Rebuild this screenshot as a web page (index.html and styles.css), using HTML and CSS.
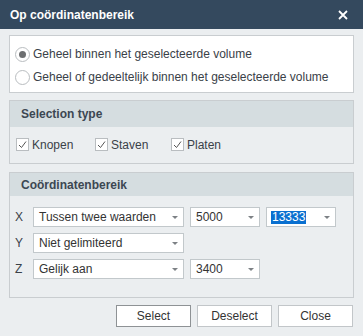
FILE: index.html
```html
<!DOCTYPE html>
<html>
<head>
<meta charset="utf-8">
<link rel="stylesheet" href="styles.css">
</head>
<body>
<div class="dialog">
  <div class="titlebar">
    <span class="title">Op coördinatenbereik</span>
    <svg class="close" width="10" height="10" viewBox="0 0 10 10"><path d="M1 1L9 9M9 1L1 9" stroke="#fff" stroke-width="1.8"/></svg>
  </div>
  <div class="content">
    <div class="frame">
      <label class="radio-row"><span class="radio checked"></span>Geheel binnen het geselecteerde volume</label>
      <label class="radio-row"><span class="radio"></span>Geheel of gedeeltelijk binnen het geselecteerde volume</label>
    </div>
    <div class="group">
      <div class="group-head">Selection type</div>
      <div class="group-body checks">
        <label class="check-row"><span class="check"><svg width="11" height="11" viewBox="0 0 11 11"><path d="M2 6L4.5 8.5L9 2.5" fill="none" stroke="#555" stroke-width="1"/></svg></span>Knopen</label>
        <label class="check-row"><span class="check"><svg width="11" height="11" viewBox="0 0 11 11"><path d="M2 6L4.5 8.5L9 2.5" fill="none" stroke="#555" stroke-width="1"/></svg></span>Staven</label>
        <label class="check-row"><span class="check"><svg width="11" height="11" viewBox="0 0 11 11"><path d="M2 6L4.5 8.5L9 2.5" fill="none" stroke="#555" stroke-width="1"/></svg></span>Platen</label>
      </div>
    </div>
    <div class="group coords">
      <div class="group-head">Coördinatenbereik</div>
      <div class="group-body rows">
        <div class="row">
          <span class="axis">X</span>
          <div class="combo wide"><span>Tussen twee waarden</span><i class="arrow"></i></div>
          <div class="combo small"><span>5000</span><i class="arrow"></i></div>
          <div class="combo small"><span class="sel">13333</span><i class="arrow"></i></div>
        </div>
        <div class="row">
          <span class="axis">Y</span>
          <div class="combo wide"><span>Niet gelimiteerd</span><i class="arrow"></i></div>
        </div>
        <div class="row">
          <span class="axis">Z</span>
          <div class="combo wide"><span>Gelijk aan</span><i class="arrow"></i></div>
          <div class="combo small"><span>3400</span><i class="arrow"></i></div>
        </div>
      </div>
    </div>
    <div class="buttons">
      <button class="btn default">Select</button>
      <button class="btn">Deselect</button>
      <button class="btn">Close</button>
    </div>
  </div>
</div>
</body>
</html>
```
FILE: styles.css
```css
* { box-sizing: border-box; }
html, body { margin: 0; padding: 0; }
body {
  width: 363px;
  height: 336px;
  background: #ebeef0;
  font-family: "Liberation Sans", Arial, sans-serif;
  font-size: 12px;
  color: #333;
  overflow: hidden;
}
.dialog { width: 363px; height: 336px; display: flex; flex-direction: column; }
.titlebar {
  height: 29px;
  background: #34495e;
  color: #fff;
  display: flex;
  align-items: center;
  justify-content: space-between;
  padding: 0 15px 0 10px;
}
.title { font-weight: bold; font-size: 12px; }
.close { display: block; }
.content { padding: 6px 9px 0 9px; display: flex; flex-direction: column; }
.frame {
  height: 58px;
  background: #fff;
  border: 1px solid #c9cdd0;
  padding: 10px 0 0 5px;
  display: flex;
  flex-direction: column;
  gap: 7px;
}
.radio-row { display: flex; align-items: center; height: 16px; color: #3a4148; }
.radio {
  width: 15px; height: 15px;
  border: 1px solid #b9bdc0;
  border-radius: 50%;
  background: #fff;
  margin-right: 3px;
  display: flex; align-items: center; justify-content: center;
}
.radio.checked::after {
  content: "";
  width: 7px; height: 7px;
  border-radius: 50%;
  background: #6d6f71;
}
.group {
  margin-top: 7px;
  border: 1px solid #c9cdd0;
  background: #ebeef0;
}
.group-head {
  height: 26px;
  background: #d5dde0;
  font-weight: bold;
  color: #3c4752;
  padding-left: 11px;
  display: flex;
  align-items: center;
}
.group-body.checks {
  height: 36px;
  display: flex;
  align-items: center;
  padding-left: 6px;
  padding-bottom: 1px;
}
.check-row { display: flex; align-items: center; color: #3a4148; width: 79px; }
.check-row + .check-row { width: 76px; }
.check {
  width: 13px; height: 13px;
  border: 1px solid #b9bdc0;
  background: #fff;
  margin-right: 3px;
  display: flex; align-items: center; justify-content: center;
}
.check svg { display: block; }
.coords { margin-top: 8px; }
.coords .group-head { height: 23px; }
.group-body.rows {
  height: 101px;
  padding: 11px 0 0 5px;
  display: flex;
  flex-direction: column;
  gap: 6px;
}
.row { display: flex; align-items: center; height: 20px; }
.axis { width: 18px; color: #3a4148; }
.combo {
  height: 20px;
  border: 1px solid #c2c8cb;
  background: #fff;
  display: flex;
  align-items: center;
  justify-content: space-between;
  padding: 0 5px 0 5px;
  color: #333;
}
.combo.wide { width: 151px; }
.combo.small { width: 70px; margin-left: 6px; }
.sel { background: #0a70d0; color: #fff; padding: 0 1px; margin-left: -1px; line-height: 13px; }
.arrow {
  width: 0; height: 0;
  border-left: 3.5px solid transparent;
  border-right: 3.5px solid transparent;
  border-top: 3.5px solid #7d8185;
  margin-top: 1px;
}
.buttons {
  display: flex;
  justify-content: flex-end;
  gap: 6px;
  margin-top: 7px;
  padding-right: 1px;
}
.btn {
  width: 75px;
  height: 22px;
  background: #fff;
  border: 1px solid #c2c6c9;
  font-family: "Liberation Sans", Arial, sans-serif;
  font-size: 12px;
  color: #333;
  padding: 0;
}
.btn.default { border-color: #8e9295; }
```
